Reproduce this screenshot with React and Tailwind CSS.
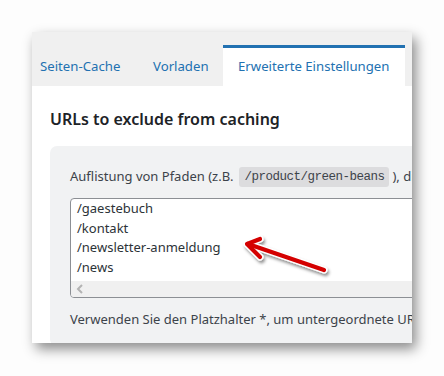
import React from "react";

export default function App() {
  return (
    <div className="relative w-[444px] h-[376px] bg-[#fdfdfd] pt-[32px] pl-[32px] overflow-hidden" style={{ fontFamily: '"Noto Sans", "Open Sans", sans-serif' }}>
      <div className="w-[380px] h-[311px] bg-white overflow-hidden shadow-[4px_6px_12px_rgba(0,0,0,0.45)] flex flex-col">
        {/* Tabs */}
        <div className="h-[54px] shrink-0 bg-[#f0f0f0] flex items-end text-[13.2px] text-[#2271b1]">
          <div className="h-[41px] flex items-center pt-[3px] pl-[8px] w-[121px] whitespace-nowrap">Seiten-Cache</div>
          <div className="h-[41px] flex items-center pt-[3px] w-[70px] whitespace-nowrap">Vorladen</div>
          <div className="h-[41px] w-[182px] flex items-center pl-[15px] bg-white border-t-[3px] border-[#2271b1] whitespace-nowrap">Erweiterte Einstellungen</div>
        </div>
        {/* Content */}
        <div className="pl-[18px] pt-[21px] flex flex-col">
          <h2 className="text-[16px] font-semibold text-[#1d2327] leading-[24px] whitespace-nowrap">URLs to exclude from caching</h2>
          <div className="mt-[15px] w-[420px] h-[200px] bg-[#f1f2f3] rounded-[7px] pl-[20px] pt-[21px]">
            <div className="flex items-center h-[20px] text-[13px] text-[#3c434a] whitespace-nowrap">
              <span>Auflistung von Pfaden (z.B.</span>
              <span className="ml-[6px] h-[20px] px-[5px] rounded-[3px] bg-[#dcdcde] flex items-center text-[12.5px] tracking-[-0.5px] text-[#3c434a]" style={{ fontFamily: '"Liberation Mono", monospace' }}>/product/green-beans</span>
              <span className="ml-[3px]">), die nicht</span>
            </div>
            <div className="mt-[11px] w-[360px] h-[100px] bg-white border border-[#8c8f94] rounded-[4px] flex flex-col overflow-hidden">
              <div className="pl-[6px] text-[13px] leading-[19.6px] text-[#2c3338] flex-1">
                <div>/gaestebuch</div>
                <div>/kontakt</div>
                <div>/newsletter-anmeldung</div>
                <div>/news</div>
              </div>
              <div className="h-[16px] bg-[#f0f0f0] flex items-center pl-[5px]">
                <svg width="8" height="10" viewBox="0 0 8 10"><path d="M6 1 L2 5 L6 9" fill="none" stroke="#b3b3b3" strokeWidth="2" /></svg>
              </div>
            </div>
            <div className="mt-[12px] text-[13px] text-[#3c434a] whitespace-nowrap">Verwenden Sie den Platzhalter *, um untergeordnete URLs auszuschließen.</div>
          </div>
        </div>
      </div>
      {/* Arrow overlay */}
      <svg className="absolute left-[236px] top-[230px]" width="100" height="50" viewBox="0 0 100 50">
        <defs>
          <filter id="sh" x="-20%" y="-40%" width="150%" height="200%">
            <feDropShadow dx="1.5" dy="2.5" stdDeviation="1.5" floodColor="#000" floodOpacity="0.45" />
          </filter>
        </defs>
        <g filter="url(#sh)" fill="none" strokeLinecap="round" strokeLinejoin="round">
          <g stroke="#ffffff" strokeWidth="7">
            <path d="M88 40 L12 14" />
            <path d="M24 9 L11 14 L24 27" />
          </g>
          <g stroke="#d40000" strokeWidth="4.2">
            <path d="M88 40 L12 14" />
            <path d="M24 9 L11 14 L24 27" />
          </g>
        </g>
      </svg>
    </div>
  );
}
